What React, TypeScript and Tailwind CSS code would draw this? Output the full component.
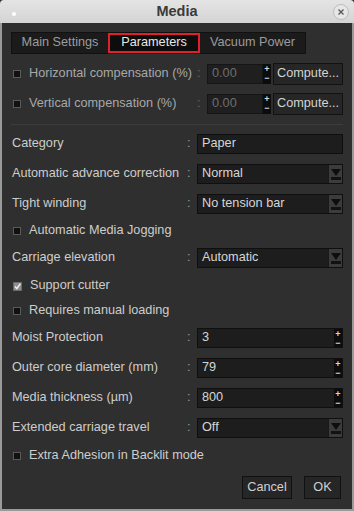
import React from 'react';

const font = { fontFamily: '"Liberation Sans", Arial, sans-serif' };

function CheckBox({ checked = false }: { checked?: boolean }) {
  if (checked) {
    return (
      <svg width="9" height="9" viewBox="0 0 9 9" className="shrink-0">
        <rect x="0.5" y="0.5" width="8" height="8" fill="#8e8e8e" stroke="#6a6a6a" />
        <path d="M2 4.6 L3.8 6.6 L7.4 1.6" stroke="#f2f2f2" strokeWidth="1.5" fill="none" />
      </svg>
    );
  }
  return <div className="w-[8px] h-[8px] border border-[#5a5a5a] bg-[#111] shrink-0" />;
}

function Spin() {
  return (
    <div className="w-[8px] h-full bg-[#0c0c0c] flex flex-col items-center justify-between py-[1px] text-[#d8d8d8] text-[9px] leading-[9px] font-bold">
      <span>+</span>
      <span>−</span>
    </div>
  );
}

function ComboArrow() {
  return (
    <div className="w-[14px] h-full bg-[#3c3c3c] border-l border-[#1a1a1a] flex flex-col items-center justify-center gap-[1px]">
      <svg width="10" height="7" viewBox="0 0 10 7">
        <path d="M0 0 H10 L5 7 Z" fill="#0e0e0e" />
      </svg>
      <div className="w-[10px] h-[3px] bg-[#121212]" />
    </div>
  );
}

function Row({ label, children }: { label: string; children: React.ReactNode }) {
  return (
    <div className="flex items-center h-[20px]">
      <span className="w-[176px] pl-[1px] text-[#cdcdcd] whitespace-nowrap">{label}</span>
      <span className="w-[10px] text-[#9a9a9a]">:</span>
      <div className="flex-1 h-full flex border border-[#0f0f0f] bg-[#1d1d1d]">{children}</div>
    </div>
  );
}

function CheckRow({ label, checked }: { label: string; checked?: boolean }) {
  return (
    <div className="flex items-center h-[18px] pl-[2px] gap-[8px] text-[#cdcdcd]">
      <CheckBox checked={checked} />
      <span>{label}</span>
    </div>
  );
}

function Compensation({ label }: { label: string }) {
  return (
    <div className="flex items-center h-[20px]">
      <div className="flex items-center gap-[8px] pl-[2px] w-[186px] text-[#a8a8a8] whitespace-nowrap">
        <CheckBox />
        <span>{label}</span>
      </div>
      <span className="w-[10px] text-[#6a6a6a]">:</span>
      <div className="w-[56px] h-full border border-[#151515] bg-[#1f1f1f] text-[#6e6e6e] pl-[4px] flex items-center">0.00</div>
      <Spin />
      <button className="ml-[2px] flex-1 h-[22px] bg-[#262626] border border-[#121212] text-[#d4d4d4] text-left pl-[3px]">Compute...</button>
    </div>
  );
}

export default function App() {
  return (
    <div className="w-[354px] h-[511px] bg-[#2f2f2f] flex flex-col text-[12.7px]" style={font}>
      <div className="h-[23px] bg-gradient-to-b from-[#e4e4e4] to-[#d4d4d4] rounded-t-[4px] relative flex items-center justify-center shrink-0">
        <div className="absolute left-[12px] top-[12px] w-[4px] h-[4px] rounded-full bg-white" />
        <span className="font-bold text-[14.5px] text-[#3a3a3a]">Media</span>
        <div className="absolute right-[5px] top-[4px] w-[16px] h-[16px] rounded-full border border-[#bdbdbd] bg-[#e6e6e6] flex items-center justify-center">
          <svg width="6" height="6" viewBox="0 0 6 6">
            <path d="M0.5 0.5 L5.5 5.5 M5.5 0.5 L0.5 5.5" stroke="#555" strokeWidth="1.3" />
          </svg>
        </div>
      </div>
      <div className="flex-1 border-x-2 border-b-2 border-[#9a9a9a] px-[9px] pt-[9px] flex flex-col">
        <div className="flex h-[22px] w-[295px] bg-[#1b1b1b] border border-[#111]">
          <div className="w-[96px] flex items-center justify-center text-[#9c9c9c]">Main Settings</div>
          <div className="w-[92px] flex items-center justify-center bg-[#0d0d0d] border-2 border-[#e0202a] text-[#e8e8e8]">Parameters</div>
          <div className="flex-1 flex items-center justify-center text-[#9c9c9c]">Vacuum Power</div>
        </div>
        <div className="mt-[10px] flex flex-col gap-[10px]">
          <Compensation label="Horizontal compensation (%)" />
          <Compensation label="Vertical compensation (%)" />
        </div>
        <div className="mt-[10px] h-[1px] bg-[#1a1a1a] border-b border-[#3c3c3c]" />
        <div className="mt-[9px] flex flex-col">
          <Row label="Category">
            <span className="pl-[4px] flex items-center text-[#d6d6d6]">Paper</span>
          </Row>
          <div className="h-[10px]" />
          <Row label="Automatic advance correction">
            <span className="flex-1 pl-[4px] flex items-center text-[#d6d6d6]">Normal</span>
            <ComboArrow />
          </Row>
          <div className="h-[10px]" />
          <Row label="Tight winding">
            <span className="flex-1 pl-[4px] flex items-center text-[#d6d6d6]">No tension bar</span>
            <ComboArrow />
          </Row>
          <div className="h-[8px]" />
          <CheckRow label="Automatic Media Jogging" />
          <div className="h-[8px]" />
          <Row label="Carriage elevation">
            <span className="flex-1 pl-[4px] flex items-center text-[#d6d6d6]">Automatic</span>
            <ComboArrow />
          </Row>
          <div className="h-[9px]" />
          <CheckRow label="Support cutter" checked />
          <div className="h-[7px]" />
          <CheckRow label="Requires manual loading" />
          <div className="h-[8px]" />
          <Row label="Moist Protection">
            <span className="flex-1 pl-[4px] flex items-center text-[#d6d6d6]">3</span>
            <Spin />
          </Row>
          <div className="h-[10px]" />
          <Row label="Outer core diameter (mm)">
            <span className="flex-1 pl-[4px] flex items-center text-[#d6d6d6]">79</span>
            <Spin />
          </Row>
          <div className="h-[10px]" />
          <Row label="Media thickness (µm)">
            <span className="flex-1 pl-[4px] flex items-center text-[#d6d6d6]">800</span>
            <Spin />
          </Row>
          <div className="h-[10px]" />
          <Row label="Extended carriage travel">
            <span className="flex-1 pl-[4px] flex items-center text-[#d6d6d6]">Off</span>
            <ComboArrow />
          </Row>
          <div className="h-[9px]" />
          <CheckRow label="Extra Adhesion in Backlit mode" />
        </div>
        <div className="mt-[11px] flex justify-end gap-[12px] pr-[2px]">
          <button className="w-[50px] h-[23px] bg-[#262626] border border-[#111] text-[#d0d0d0]">Cancel</button>
          <button className="w-[37px] h-[23px] bg-[#262626] border border-[#111] text-[#d0d0d0]">OK</button>
        </div>
      </div>
    </div>
  );
}
